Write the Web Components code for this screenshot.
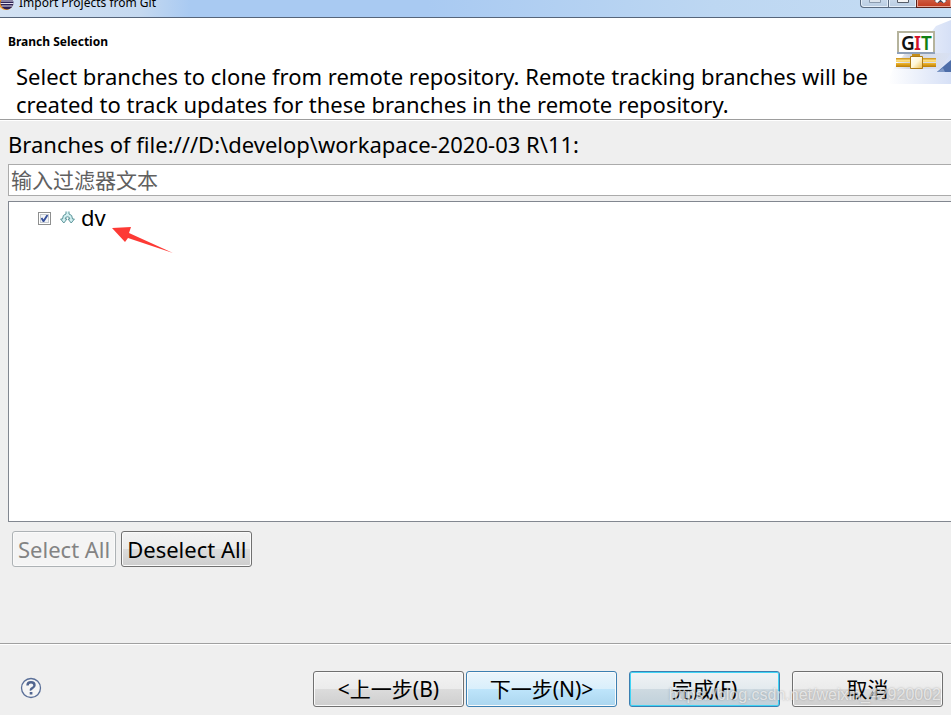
<!DOCTYPE html>
<html lang="zh-CN">
<head>
<meta charset="utf-8">
<title>Import Projects from Git</title>
<style>
    body {
        margin: 0;
        color: #000;
        font-family: "Noto Sans", "Noto Sans CJK SC", sans-serif;
        font-size: 22px;
        line-height: 28px;
    }
</style>
</head>
<body>
<wizard-dialog>
    <wizard-titlebar slot="titlebar">Import Projects from Git</wizard-titlebar>
    <wizard-header slot="header">
        <span slot="title">Branch Selection</span>
        Select branches to clone from remote repository. Remote tracking branches will be created to track updates for these branches in the remote repository.
    </wizard-header>
    <branch-selector>Branches of file:///D:\develop\workapace-2020-03 R\11:</branch-selector>
    <wizard-footer slot="footer"></wizard-footer>
</wizard-dialog>

<script>
class WizardDialog extends HTMLElement {
    constructor() {
        super();
        this.shadow = this.attachShadow({mode: 'open'});
    }

    connectedCallback() {
        this.render();
    }

    render() {
        this.shadow.innerHTML =
        `
        <style>
            :host {
                background-color: #efefef;
                display: flex;
                flex-direction: column;
                min-height: 100vh;
                overflow: hidden;
            }

            main {
                display: flex;
                flex: 1;
                flex-direction: column;
            }
        </style>
        <slot name="titlebar"></slot>
        <slot name="header"></slot>
        <main><slot></slot></main>
        <slot name="footer"></slot>
        `;
    }
}

customElements.define('wizard-dialog', WizardDialog);

class WizardTitlebar extends HTMLElement {
    constructor() {
        super();
        this.shadow = this.attachShadow({mode: 'open'});
    }

    connectedCallback() {
        this.render();
    }

    render() {
        this.shadow.innerHTML =
        `
        <style>
            :host {
                align-items: flex-end;
                background: linear-gradient(90deg, #d3e2f3 0, #c5d9f0 140px, #a9caf2 190px, #a9caf2 45%, #bdd7f2 75%, #c5dcf3 100%);
                border-bottom: 1px solid #56657a;
                box-sizing: border-box;
                display: flex;
                font-size: 12px;
                height: 18px;
                line-height: 22px;
                overflow: hidden;
            }

            .logo {
                flex: none;
                height: 16px;
                margin: 0 4px 7px 0;
                width: 15px;
            }

            .title {
                flex: 1;
                padding-bottom: 3px;
            }

            .controls {
                display: flex;
                flex: none;
                margin-bottom: 9px;
            }

            button {
                align-items: flex-end;
                background: linear-gradient(#dbe8f5, #b9cde2);
                border: 1px solid #5a6b80;
                border-right: 0;
                box-shadow: inset 0 0 0 1px #e5eff9;
                display: flex;
                height: 20px;
                justify-content: center;
                padding: 0 0 4px;
                width: 28px;
            }

            button:first-child {
                border-bottom-left-radius: 4px;
            }

            .close {
                background: linear-gradient(#dc8a72, #c33a1e);
                border-color: #5b2018;
                box-shadow: inset 0 0 0 1px #e8a595;
                padding-left: 12px;
                width: 35px;
            }
        </style>
        <svg class="logo" viewBox="0 0 15 16">
            <circle cx="6" cy="9" r="7" fill="#f7941e"/>
            <circle cx="7" cy="9" r="6.5" fill="#2c2255"/>
            <path d="M1 7h12M.5 9.500h13M1.500 12h11" stroke="#e5e1ef" stroke-width="1.100"/>
        </svg>
        <span class="title"><slot></slot></span>
        <div class="controls">
            <button aria-label="Minimize"><svg width="12" height="5"><path d="M.5.5h11v4H.5z" fill="#dbe4ed" stroke="#8b9bae"/></svg></button>
            <button aria-label="Maximize"><svg width="12" height="9"><path d="M.5.5h11v8H.5z" fill="#f5f5f5" stroke="#555d68"/></svg></button>
            <button class="close" aria-label="Close"><svg width="13" height="10"><path d="M2 0l9 9M11 0L2 9" stroke="#454b5c" stroke-width="5"/><path d="M2 0l9 9M11 0L2 9" stroke="#fff" stroke-width="3"/></svg></button>
        </div>
        `;
    }
}

customElements.define('wizard-titlebar', WizardTitlebar);

class WizardHeader extends HTMLElement {
    constructor() {
        super();
        this.shadow = this.attachShadow({mode: 'open'});
    }

    connectedCallback() {
        this.render();
    }

    render() {
        this.shadow.innerHTML =
        `
        <style>
            :host {
                align-items: flex-start;
                background-color: #fff;
                border-bottom: 1px solid #9d9d9d;
                box-shadow: 0 1px 0 #fff;
                display: flex;
            }

            .text {
                flex: 1;
                padding: 15px 8px 1px;
            }

            h1 {
                font-size: 12px;
                font-weight: 700;
                line-height: 18px;
                margin: 0 0 11px;
            }

            p {
                margin: 0;
                padding: 0 8px;
            }

            .banner {
                flex: none;
                height: 66px;
                width: 63px;
            }
        </style>
        <div class="text">
            <h1><slot name="title"></slot></h1>
            <p><slot></slot></p>
        </div>
        <svg class="banner" viewBox="0 0 63 66" role="img" aria-label="GIT">
            <defs>
                <linearGradient id="sky" x1="0" x2="1"><stop offset="0" stop-color="#fff"/><stop offset="1" stop-color="#d6e0f6"/></linearGradient>
                <linearGradient id="gold" x1="0" x2="0" y1="0" y2="1"><stop offset="0" stop-color="#c98d10"/><stop offset=".3" stop-color="#ffe48a"/><stop offset=".65" stop-color="#e7ab20"/><stop offset="1" stop-color="#b97c08"/></linearGradient>
                <linearGradient id="hub" x1="0" x2="1" y1="0" y2="1"><stop offset="0" stop-color="#fff"/><stop offset=".5" stop-color="#fff6d5"/><stop offset="1" stop-color="#edbd4d"/></linearGradient>
                <linearGradient id="shade" x1="0" x2="1"><stop offset="0" stop-color="#c7cbd5" stop-opacity="0"/><stop offset=".3" stop-color="#c7cbd5" stop-opacity=".8"/><stop offset="1" stop-color="#d9dfec" stop-opacity=".4"/></linearGradient>
            </defs>
            <path d="M0 66Q4 48 14 40Q36 26 48 8L63 2V66z" fill="url(#sky)"/>
            <path d="M5 51l12-16h46l-11 16z" fill="url(#shade)"/>
            <path d="M49 54l8-7 6-5v12z" fill="#4d6da8"/>
            <path d="M49 54l6-4 2 4z" fill="#7e98c6"/>
            <path d="M24 35h8v4h-8z" fill="#c68f1a"/>
            <path d="M8 40h40v4H8zM8 45h40v4H8z" fill="url(#gold)"/>
            <path d="M22.500 38.500h12v12h-12z" fill="url(#hub)" stroke="#b07c12"/>
            <path d="M10 14h36v21H10z" fill="#fff" stroke="#b5b39c" stroke-width="2"/>
            <path d="M9 34h38v2H9z" fill="#8fa0b8"/>
            <g font-family="Noto Sans, sans-serif" font-weight="600" font-size="19">
                <text x="13" y="32" fill="#111">G</text>
                <text x="26" y="32" fill="#d3122a">I</text>
                <text x="33" y="32" fill="#118013">T</text>
            </g>
        </svg>
        `;
    }
}

customElements.define('wizard-header', WizardHeader);

class WizardButton extends HTMLElement {
    constructor() {
        super();
        this.shadow = this.attachShadow({mode: 'open'});
    }

    connectedCallback() {
        this.render();
    }

    render() {
        this.shadow.innerHTML =
        `
        <style>
            :host {
                display: block;
            }

            button {
                background: linear-gradient(#f3f3f3 0, #ebebeb 50%, #dcdcdc 50%, #cecece 100%);
                border: 1px solid #707070;
                border-radius: 3px;
                box-shadow: inset 0 0 0 1px #fafafa;
                box-sizing: border-box;
                color: #000;
                display: block;
                font: inherit;
                height: 36px;
                line-height: 28px;
                padding: 0 5px 1px;
                white-space: nowrap;
                width: 100%;
            }

            :host([hot]) button {
                background: linear-gradient(#eaf5fc 0, #d9effb 50%, #bee5fb 50%, #abd6ef 100%);
                border-color: #3c7fb1;
            }

            :host([default]) button {
                background: linear-gradient(#f0f3f5 0, #e3eaee 50%, #cedae1 50%, #bfd0da 100%);
                border-color: #3c7fb1;
                box-shadow: inset 0 0 0 1px #3fd4f5;
            }

            button:disabled {
                background: #f4f4f4;
                border-color: #adb2b5;
                color: #838383;
            }
        </style>
        <button type="button" ${this.hasAttribute('disabled') ? 'disabled' : ''}><slot></slot></button>
        `;
    }
}

customElements.define('wizard-button', WizardButton);

class BranchSelector extends HTMLElement {
    constructor() {
        super();
        this.shadow = this.attachShadow({mode: 'open'});
    }

    connectedCallback() {
        this.render();
    }

    render() {
        this.shadow.innerHTML =
        `
        <style>
            :host {
                display: flex;
                flex: 1;
                flex-direction: column;
                padding: 10px 0 76px 8px;
            }

            .filter {
                background-color: #fff;
                border: 1px solid #ababab;
                border-right: 0;
                box-sizing: border-box;
                font: inherit;
                font-size: 21px;
                height: 32px;
                margin: 6px 0 5px;
                padding: 0 2px;
                width: 100%;
            }

            .filter::placeholder {
                color: #606060;
                opacity: 1;
            }

            .tree {
                background-color: #fff;
                border: 1px solid #828790;
                border-right: 0;
                flex: 1;
                padding: 1px 0 0 28px;
            }

            .item {
                display: flex;
                position: relative;
            }

            .item label {
                align-items: center;
                display: flex;
                gap: 6px;
            }

            input[type=checkbox] {
                appearance: none;
                background: #f2f4f6 url("data:image/svg+xml,%3Csvg xmlns='http://www.w3.org/2000/svg' viewBox='0 0 9 9'%3E%3Cpath d='M1.5 4l2 3.200L7.500 1' fill='none' stroke='%23354f9b' stroke-width='1.900'/%3E%3C/svg%3E") center / 9px no-repeat;
                border: 1px solid #8e8f8f;
                box-shadow: inset 0 0 0 1px #fff, inset 0 0 0 2px #c5cad0;
                height: 13px;
                margin: 3px 3px 0 1px;
                width: 13px;
            }

            /* red pointer lying over the tree */
            .pointer {
                left: 75px;
                pointer-events: none;
                position: absolute;
                top: 23px;
            }

            .actions {
                display: flex;
                gap: 5px;
                padding: 9px 4px 0;
            }
        </style>
        <label for="filter"><slot></slot></label>
        <input id="filter" class="filter" type="text" placeholder="输入过滤器文本">
        <div class="tree">
            <div class="item">
                <label>
                    <input type="checkbox" checked>
                    <svg width="15" height="13" viewBox="0 0 15 13" fill="#d3f0f1" stroke="#5b9499" stroke-linejoin="round">
                        <path d="M6 .5V3Q2.500 3.500 2.500 8H.6L3.800 12 7 8H5.200Q5.200 5.800 7.500 5.800T9.800 8H8l3.200 4L14.400 8h-1.900Q12.500 3.500 9 3V.5"/>
                    </svg>
                    <span>dv</span>
                </label>
                <svg class="pointer" width="62" height="28" viewBox="0 0 62 28"><path d="M0 2L19 1l-2 6 44 20L16 12l-3 4z" fill="#fd3a35"/></svg>
            </div>
        </div>
        <div class="actions">
            <wizard-button disabled>Select All</wizard-button>
            <wizard-button>Deselect All</wizard-button>
        </div>
        `;
    }
}

customElements.define('branch-selector', BranchSelector);

class WizardFooter extends HTMLElement {
    constructor() {
        super();
        this.shadow = this.attachShadow({mode: 'open'});
    }

    connectedCallback() {
        this.render();
    }

    render() {
        this.shadow.innerHTML =
        `
        <style>
            :host {
                align-items: center;
                border-top: 1px solid #a0a0a0;
                box-shadow: inset 0 1px 0 #fff;
                display: flex;
                font-size: 21px;
                padding: 27px 8px 8px 20px;
                position: relative;
            }

            .help {
                background: none;
                border: 0;
                height: 22px;
                margin-bottom: 2px;
                padding: 0;
                width: 22px;
            }

            .help svg {
                display: block;
            }

            nav {
                display: flex;
                gap: 12px;
                margin-left: auto;
            }

            .steps {
                display: flex;
                gap: 2px;
            }

            wizard-button {
                width: 151px;
            }

            .watermark {
                bottom: 8px;
                color: rgba(255, 255, 255, 0.65);
                font-family: "Liberation Sans", sans-serif;
                font-size: 16px;
                line-height: 24px;
                pointer-events: none;
                position: absolute;
                right: 10px;
                text-shadow: 0 0 2px rgba(100, 100, 100, 0.5);
            }
        </style>
        <button class="help" aria-label="Help">
            <svg width="22" height="22" viewBox="0 0 22 22">
                <circle cx="11" cy="11" r="9.500" fill="#f5f5f5" stroke="#5a6f98" stroke-width="1.300"/>
                <path d="M7.500 8.500Q7.500 5.300 11 5.300T14.500 8.300Q14.500 10 12.500 11T11 13.500" fill="none" stroke="#51658f" stroke-width="2.400"/>
                <path d="M9.700 15h2.700v2.500H9.700z" fill="#51658f"/>
            </svg>
        </button>
        <nav>
            <div class="steps">
                <wizard-button>&lt;上一步(B)</wizard-button>
                <wizard-button hot>下一步(N)&gt;</wizard-button>
            </div>
            <wizard-button default>完成(F)</wizard-button>
            <wizard-button>取消</wizard-button>
        </nav>
        <span class="watermark">https://blog.csdn.net/weixin_42920002</span>
        `;
    }
}

customElements.define('wizard-footer', WizardFooter);
</script>
</body>
</html>
